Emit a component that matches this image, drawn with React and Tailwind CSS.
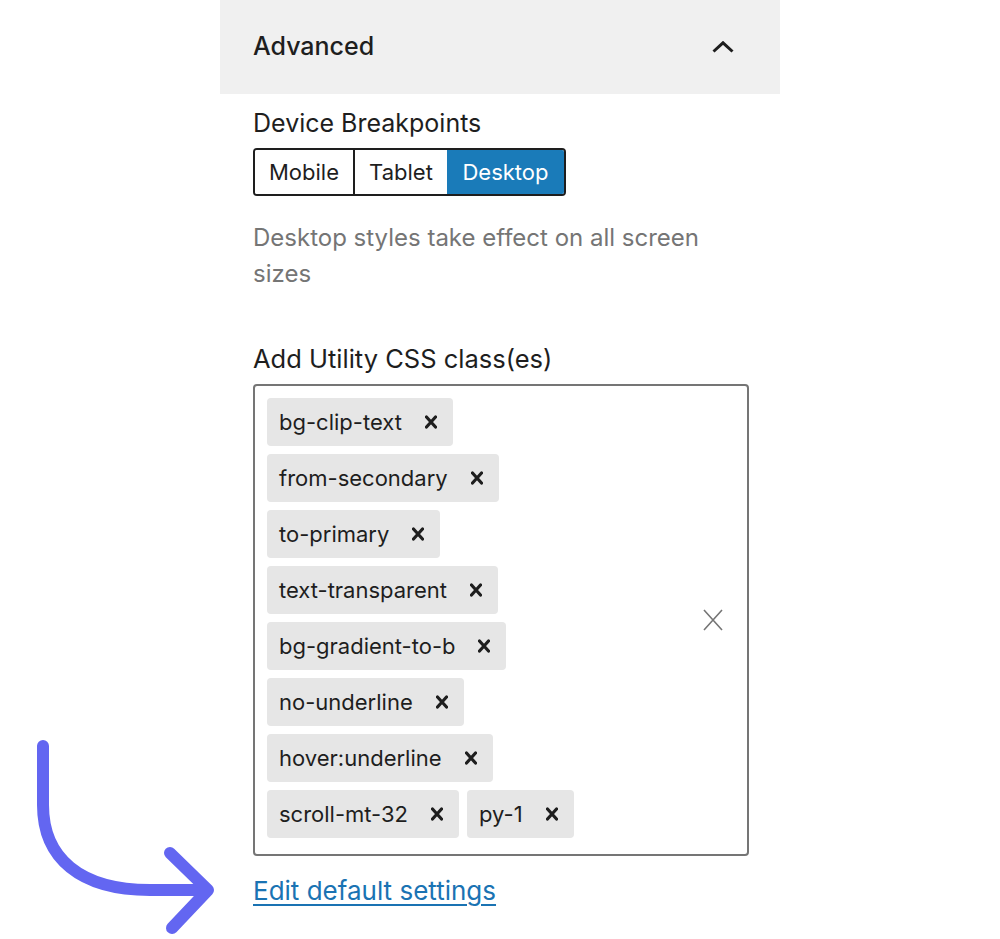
import React from "react";

const tokenRows = [
  ["bg-clip-text"],
  ["from-secondary"],
  ["to-primary"],
  ["text-transparent"],
  ["bg-gradient-to-b"],
  ["no-underline"],
  ["hover:underline"],
  ["scroll-mt-32", "py-1"],
];

const Token = ({ label }) => (
  <div className="h-[48px] flex items-center bg-[#e6e6e6] rounded-[4px] pl-[12px] pr-[16px]">
    <span className="text-[22px] leading-none text-[#1e1e1e]">{label}</span>
    <svg className="ml-[23px]" width="12" height="14" viewBox="0 0 12 14" fill="none">
      <path d="M1.5 2L10.5 12M10.5 2L1.5 12" stroke="#1e1e1e" strokeWidth="3.2" strokeLinecap="round" />
    </svg>
  </div>
);

const App = () => {
  return (
    <div className="relative min-h-[939px] bg-white font-['Inter',sans-serif] text-[#1e1e1e]">
      <div className="ml-[220px] w-[560px]">
        {/* Panel header */}
        <div className="h-[94px] bg-[#f0f0f0] flex items-center justify-between pl-[33px] pr-[46px]">
          <span className="text-[25px] font-medium">Advanced</span>
          <svg width="22" height="12" viewBox="0 0 22 12" fill="none">
            <path d="M1.5 10.5L11 1.8L20.5 10.5" stroke="#1e1e1e" strokeWidth="3" />
          </svg>
        </div>

        {/* Panel body */}
        <div className="pl-[33px] pr-[32px] pt-[13px]">
          <div className="text-[25px] leading-[32px]">Device Breakpoints</div>
          <div className="mt-[9px] flex w-fit h-[48px] border-2 border-[#1e1e1e] rounded-[4px] overflow-hidden text-[22px]">
            <button className="w-[98px] flex items-center justify-center bg-white">Mobile</button>
            <button className="w-[94px] flex items-center justify-center bg-white border-l-2 border-[#1e1e1e]">Tablet</button>
            <button className="w-[117px] flex items-center justify-center bg-[#1a7bb9] text-white">Desktop</button>
          </div>
          <p className="mt-[24px] w-[470px] text-[24px] leading-[36px] text-[#757575]">
            Desktop styles take effect on all screen sizes
          </p>

          <div className="mt-[51px] text-[25.5px] leading-[32px]">Add Utility CSS class(es)</div>
          <div className="mt-[9px] w-[496px] h-[472px] border-2 border-[#757575] rounded-[4px] pl-[12px] py-[12px] pr-[24px] flex items-center justify-between">
            <div className="self-start flex flex-col gap-[8px]">
              {tokenRows.map((row, i) => (
                <div key={i} className="flex gap-[8px]">
                  {row.map((t) => (
                    <Token key={t} label={t} />
                  ))}
                </div>
              ))}
            </div>
            <svg width="20" height="22" viewBox="0 0 20 22" fill="none">
              <path d="M1 1L19 21M19 1L1 21" stroke="#757575" strokeWidth="1.6" />
            </svg>
          </div>

          <a href="#" className="block mt-[19px] w-fit text-[26px] leading-[32px] text-[#1a73b3] underline underline-offset-[4px]">
            Edit default settings
          </a>
        </div>
      </div>

      {/* annotation arrow */}
      <svg className="absolute left-0 top-[730px]" width="240" height="209" viewBox="0 730 240 209" fill="none">
        <path d="M43 746 V805 C43 858 80 890 150 890 H204" stroke="#6366f1" strokeWidth="12" strokeLinecap="round" strokeLinejoin="round" />
        <path d="M170 853 L208 890 L172 928" stroke="#6366f1" strokeWidth="12" strokeLinecap="round" strokeLinejoin="round" />
      </svg>
    </div>
  );
};

export default App;
